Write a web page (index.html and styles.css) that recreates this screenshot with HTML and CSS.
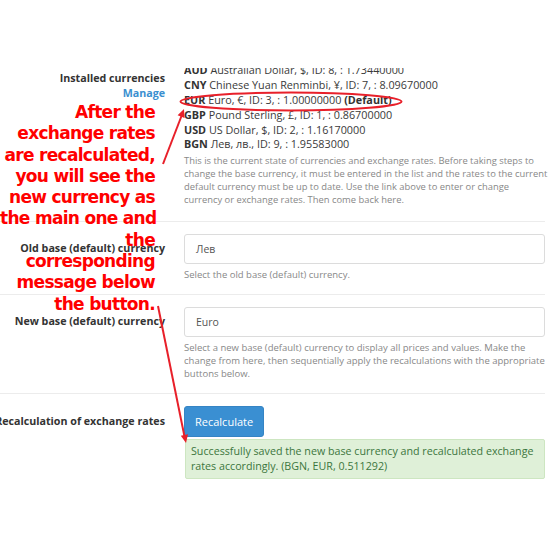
FILE: index.html
```html
<!DOCTYPE html>
<html>
<head>
<meta charset="utf-8">
<link rel="stylesheet" href="styles.css">
</head>
<body>
<div class="page">
  <div class="row row-first">
    <div class="label label-first">
      <div>Installed currencies</div>
      <a class="manage">Manage</a>
    </div>
    <div class="content">
      <div class="clip">
        <div class="list">
          <div><b>AUD</b> Australian Dollar, $, ID: 8, : 1.73440000</div>
          <div><b>CNY</b> Chinese Yuan Renminbi, ¥, ID: 7, : 8.09670000</div>
          <div><b>EUR</b> Euro, €, ID: 3, : 1.00000000 <b>(Default)</b></div>
          <div><b>GBP</b> Pound Sterling, £, ID: 1, : 0.86700000</div>
          <div><b>USD</b> US Dollar, $, ID: 2, : 1.16170000</div>
          <div><b>BGN</b> Лев, лв., ID: 9, : 1.95583000</div>
        </div>
      </div>
      <p class="help help-desc">This is the current state of currencies and exchange rates. Before taking steps to change the base currency, it must be entered in the list and the rates to the current default currency must be up to date. Use the link above to enter or change currency or exchange rates. Then come back here.</p>
    </div>
  </div>
  <div class="row">
    <div class="label label-input"><span>Old base (default) currency</span></div>
    <div class="content">
      <div class="input">Лев</div>
      <p class="help">Select the old base (default) currency.</p>
    </div>
  </div>
  <div class="row">
    <div class="label label-input"><span>New base (default) currency</span></div>
    <div class="content">
      <div class="input">Euro</div>
      <p class="help">Select a new base (default) currency to display all prices and values. Make the change from here, then sequentially apply the recalculations with the appropriate buttons below.</p>
    </div>
  </div>
  <div class="row row-last">
    <div class="label label-button"><span>Recalculation of exchange rates</span></div>
    <div class="content">
      <button class="btn">Recalculate</button>
      <div class="success">Successfully saved the new base currency and recalculated exchange rates accordingly. (BGN, EUR, 0.511292)</div>
    </div>
  </div>
</div>

<div class="note">After the<br>exchange rates<br>are recalculated,<br>you will see the<br>new currency as<br>the main one and<br>the<br>corresponding<br>message below<br>the button.</div>

<svg class="marks" width="550" height="550" viewBox="0 0 550 550">
  <ellipse cx="291" cy="101.5" rx="110.5" ry="9" fill="none" stroke="#e8202a" stroke-width="2"/>
  <line x1="163" y1="164" x2="181.5" y2="116" stroke="#e8202a" stroke-width="2"/>
  <polygon points="184,109 184.6,117.9 177.6,115.2" fill="#e8202a"/>
  <line x1="158" y1="306" x2="184.4" y2="436" stroke="#e8202a" stroke-width="2"/>
  <polygon points="186,443 188,434.3 180.8,435.8" fill="#e8202a"/>
</svg>
</body>
</html>
```

FILE: styles.css
```css
html, body {
  margin: 0;
  padding: 0;
  background: #fff;
}
body {
  position: relative;
  width: 550px;
  height: 550px;
  overflow: hidden;
  font-family: "Open Sans", "DejaVu Sans", sans-serif;
  color: #333;
}
.page {
  padding: 68px 5px 0 0;
}
.row {
  display: grid;
  grid-template-columns: 165px 1fr;
  column-gap: 19px;
  padding: 12px 0 13px;
  border-bottom: 1px solid #ececec;
}
.row-first {
  padding-top: 0;
  padding-bottom: 14.5px;
}
.row-last {
  border-bottom: none;
}
.label {
  text-align: right;
  font-weight: 700;
  font-size: 10.7px;
  line-height: 15px;
  color: #333;
  white-space: nowrap;
}
.label-first {
  padding-top: 2.5px;
}
.manage {
  color: #3a8fd0;
  font-weight: 700;
}
.label-input,
.label-button {
  display: flex;
  justify-content: flex-end;
  align-items: flex-start;
  padding-top: 7.5px;
}
.label-button {
  padding-top: 8px;
}
.content {
  min-width: 0;
}
.clip {
  overflow: hidden;
}
.list {
  margin-top: -4.6px;
  font-size: 10.8px;
  line-height: 14.8px;
  color: #3a3a3a;
  white-space: nowrap;
}
.list b {
  font-weight: 700;
  color: #333;
}
.help {
  margin: 4px 0 0;
  font-size: 9.5px;
  line-height: 13px;
  color: #888;
}
.help-desc {
  margin-top: 2.2px;
  margin-right: -3px;
  font-size: 9.4px;
}
.input {
  box-sizing: border-box;
  height: 30px;
  border: 1px solid #dcdcdc;
  border-radius: 3px;
  padding: 0 11px;
  display: flex;
  align-items: center;
  font-size: 10.5px;
  color: #555;
}
.btn {
  display: block;
  box-sizing: border-box;
  height: 31px;
  padding: 0 10px;
  border: 1px solid #3584c4;
  border-radius: 3px;
  background: #3a8fd2;
  color: #fff;
  font-family: "Open Sans", sans-serif;
  font-size: 11px;
}
.success {
  margin: 2px 0 0 1px;
  padding: 4px 5px;
  background: #dff0d8;
  border: 1px solid #cde6c1;
  border-radius: 2px;
  color: #3c763d;
  font-size: 10.7px;
  line-height: 15px;
}
.note {
  position: absolute;
  left: 0;
  top: 102px;
  width: 155px;
  text-align: right;
  color: #ff0000;
  font-family: "DejaVu Sans", sans-serif;
  font-weight: 700;
  font-size: 17px;
  line-height: 21.3px;
  letter-spacing: -0.7px;
  white-space: nowrap;
}
.marks {
  position: absolute;
  left: 0;
  top: 0;
  pointer-events: none;
}
```
